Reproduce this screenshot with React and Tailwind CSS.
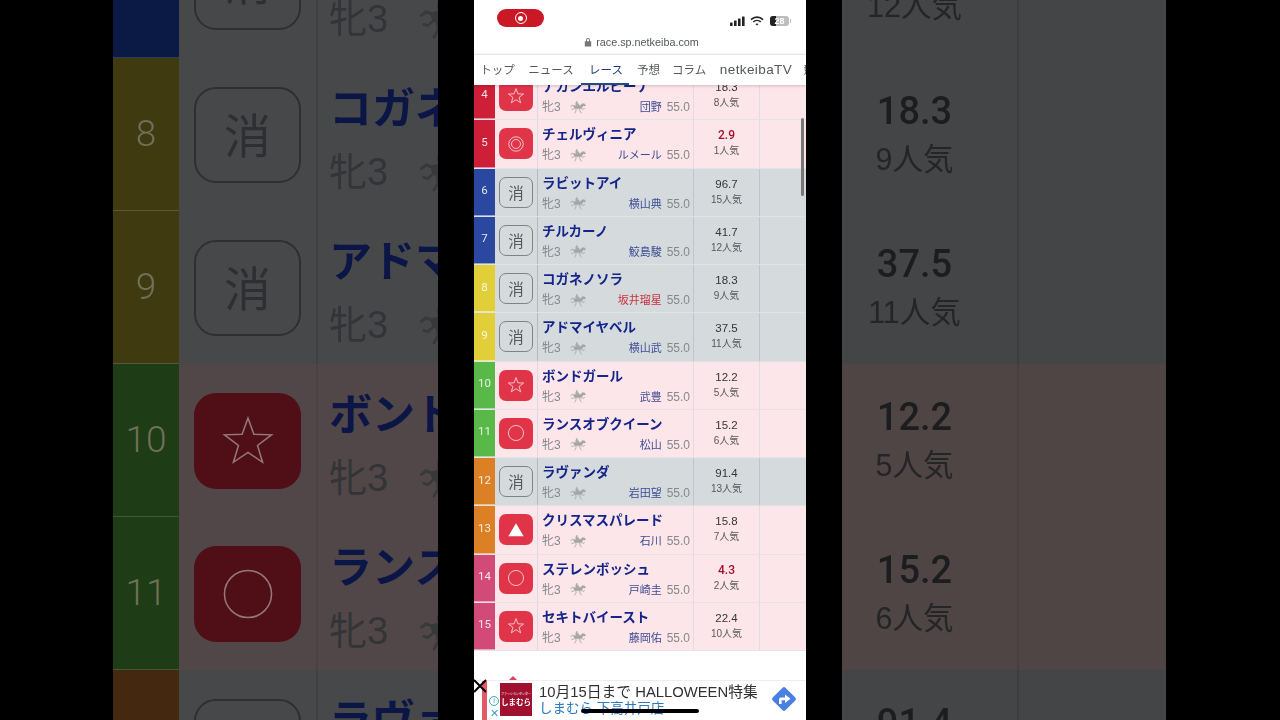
const FONT = "font-['Liberation_Sans','Noto_Sans_CJK_JP',sans-serif]";

function Horse({ className }) {
  return (
    <svg viewBox="0 0 18 14" className={className} fill="currentColor" stroke="currentColor" strokeLinecap="round" strokeLinejoin="round">
      <circle cx="7.2" cy="1.2" r="1" stroke="none" />
      <path d="M6.2 2.2 L8.6 2.6 L9.6 4.2 L6.6 4.6 Z" strokeWidth="0.5" />
      <path d="M4 5.2 C6 4.2 9 4.4 11 4.8 L13.4 2.8 L15.4 3 L16.8 4.8 L15.6 5.3 L14.2 5 L12.4 7.6 C10 8.6 6.6 8.6 4.6 7.6 Z" strokeWidth="0.4" />
      <path d="M4.4 5.4 L2.4 4.6 L0.8 5.8" fill="none" strokeWidth="1" />
      <path d="M5 7.4 L3 9.2 L1.6 8.8 M6 8 L6.4 10.6 L5 13 M11.6 7.8 L13.6 9 L15.4 8.2 M10.2 8.2 L10.6 10.8 L12 13" fill="none" strokeWidth="0.9" />
    </svg>
  );
}

function Mark({ type, big }) {
  const box = big
    ? "w-[107px] h-[96px] rounded-[22px] flex items-center justify-center"
    : "w-[34px] h-[31px] rounded-[7px] flex items-center justify-center";
  if (type === "消") {
    return (
      <div
        className={
          big
            ? `${box} pt-[6px] border-2 border-[#2e2f32] text-[#2e2f32] text-[47px]`
            : `${box} pt-[2px] border border-[#808488] text-[#55585c] text-[15.5px]`
        }
      >
        消
      </div>
    );
  }
  const s = big ? "w-[56px] h-[56px]" : "w-[18px] h-[18px]";
  const stroke = big ? "#94787b" : "#f7dfe2";
  return (
    <div className={`${box} ${big ? "bg-[#500f16]" : "bg-[#e03549]"}`}>
      <svg viewBox="0 0 20 20" className={s} fill="none" stroke={stroke} strokeWidth={big ? "0.55" : "0.9"}>
        {type === "star" && <path d="M10 1.8 L12.1 7.6 L18.4 7.8 L13.4 11.6 L15.2 17.6 L10 14.1 L4.8 17.6 L6.6 11.6 L1.6 7.8 L7.9 7.6 Z" />}
        {type === "circle" && <circle cx="10" cy="10" r="8.4" />}
        {type === "double" && (
          <>
            <circle cx="10" cy="10" r="8" />
            <circle cx="10" cy="10" r="5" />
          </>
        )}
        {type === "tri" && <path d="M10 2.5 L18.5 17 L1.5 17 Z" fill="#ffffff" stroke="none" />}
      </svg>
    </div>
  );
}

const rows = [
  { n: 4, c: "bg-[#cd1f38]", m: "star", name: "ナカンエルピーナ", j: "団野", o: "18.3", p: "8人気" },
  { n: 5, c: "bg-[#cd1f38]", m: "double", name: "チェルヴィニア", j: "ルメール", o: "2.9", p: "1人気", hot: true },
  { n: 6, c: "bg-[#2a489f]", m: "消", name: "ラビットアイ", j: "横山典", o: "96.7", p: "15人気" },
  { n: 7, c: "bg-[#2a489f]", m: "消", name: "チルカーノ", j: "鮫島駿", o: "41.7", p: "12人気" },
  { n: 8, c: "bg-[#e0cf38]", m: "消", name: "コガネノソラ", j: "坂井瑠星", o: "18.3", p: "9人気", red: true },
  { n: 9, c: "bg-[#e0cf38]", m: "消", name: "アドマイヤベル", j: "横山武", o: "37.5", p: "11人気" },
  { n: 10, c: "bg-[#58b848]", m: "star", name: "ボンドガール", j: "武豊", o: "12.2", p: "5人気" },
  { n: 11, c: "bg-[#58b848]", m: "circle", name: "ランスオブクイーン", j: "松山", o: "15.2", p: "6人気" },
  { n: 12, c: "bg-[#db8024]", m: "消", name: "ラヴァンダ", j: "岩田望", o: "91.4", p: "13人気" },
  { n: 13, c: "bg-[#db8024]", m: "tri", name: "クリスマスパレード", j: "石川", o: "15.8", p: "7人気" },
  { n: 14, c: "bg-[#d24a78]", m: "circle", name: "ステレンボッシュ", j: "戸崎圭", o: "4.3", p: "2人気", hot: true },
  { n: 15, c: "bg-[#d24a78]", m: "star", name: "セキトバイースト", j: "藤岡佑", o: "22.4", p: "10人気" },
];

function PhoneRow({ r }) {
  const off = r.m === "消";
  const rowBg = off ? "bg-[#d5dadd]" : "bg-[#fde6e9]";
  const line = off ? "border-[#bfc5ca]" : "border-[#dcdde6]";
  return (
    <div className={`flex h-[48.25px] ${rowBg} border-b ${off ? "border-[#dfe3e6]" : "border-[#e6e2e9]"}`}>
      <div className={`w-[21px] pb-[2px] flex items-center justify-center font-['Roboto'] text-[11.5px] text-white/85 border-b border-white/50 ${r.c}`}>{r.n}</div>
      <div className={`w-[43px] flex items-center justify-center border-r ${off ? "border-[#b5babf]" : "border-[#d8d9e2]"}`}>
        <Mark type={r.m} />
      </div>
      <div className={`w-[156px] pl-[4px] pr-[3px] border-r ${line}`}>
        <div className="pt-[6px] text-[13.5px] leading-[18px] font-bold text-[#14248a] whitespace-nowrap">{r.name}</div>
        <div className="mt-[3px] flex items-center justify-between text-[12px] leading-[16px] text-[#85888c]">
          <div className="flex items-center gap-[9px]">
            <span>牝3</span>
            <Horse className="w-[17px] h-[13px] text-[#a3a5a6]" />
          </div>
          <div className="flex items-center gap-[5px] whitespace-nowrap">
            <span className={`text-[11px] ${r.red ? "text-[#c8333f]" : "text-[#3d4c94]"}`}>{r.j}</span>
            <span>55.0</span>
          </div>
        </div>
      </div>
      <div className={`w-[66px] flex flex-col items-center border-r ${line}`}>
        <div className={`pt-[6px] leading-[18px] ${r.hot ? "font-['Roboto'] font-medium text-[12px] text-[#a80f2c]" : "text-[11.5px] text-[#333538]"}`}>{r.o}</div>
        <div className="text-[10px] leading-[14px] text-[#55585c]">{r.p}</div>
      </div>
      <div className="flex-1" />
    </div>
  );
}

const leftRows = [
  { n: 7, c: "bg-[#0a1a45]", m: "消", name: "チルカーノ" },
  { n: 8, c: "bg-[#3f3a10]", m: "消", name: "コガネノソラ" },
  { n: 9, c: "bg-[#3f3a10]", m: "消", name: "アドマイヤベル" },
  { n: 10, c: "bg-[#1e3c16]", m: "star", name: "ボンドガール" },
  { n: 11, c: "bg-[#1e3c16]", m: "circle", name: "ランスオブクイーン" },
  { n: 12, c: "bg-[#44280f]", m: "消", name: "ラヴァンダ" },
];

function LeftRow({ r }) {
  const off = r.m === "消";
  return (
    <div className={`flex h-[153px] shrink-0 ${off ? "bg-[#47484a]" : "bg-[#524748]"}`}>
      <div className={`w-[66px] shrink-0 flex items-center justify-center font-['Roboto'] font-light text-[37px] text-[#6f7058] border-b border-white/15 ${r.c}`}>{r.n}</div>
      <div className={`w-[139px] shrink-0 pl-[15px] flex items-center border-r-2 ${off ? "border-[#3f4043]" : "border-[#4a4344]"}`}>
        <Mark type={r.m} big />
      </div>
      <div className="pl-[11px] min-w-0">
        <div className="pt-[22px] text-[43px] leading-[58px] font-bold text-[#0b1646] whitespace-nowrap">{r.name}</div>
        <div className="mt-[9px] flex items-center gap-[31px] text-[38px] leading-[50px] text-[#333437]">
          <span className="whitespace-nowrap">牝3</span>
          <Horse className="w-[54px] h-[42px] shrink-0 text-[#38393b]" />
        </div>
      </div>
    </div>
  );
}

const rightRows = [
  { m: "消", o: "41.7", p: "12人気" },
  { m: "消", o: "18.3", p: "9人気" },
  { m: "消", o: "37.5", p: "11人気" },
  { m: "star", o: "12.2", p: "5人気" },
  { m: "circle", o: "15.2", p: "6人気" },
  { m: "消", o: "91.4", p: "13人気" },
];

function RightRow({ r }) {
  const off = r.m === "消";
  return (
    <div className={`flex h-[153px] shrink-0 ${off ? "bg-[#444547]" : "bg-[#4f4545]"}`}>
      <div className={`w-[177px] pr-[30px] shrink-0 flex flex-col items-center border-r-2 ${off ? "border-[#3c3d40]" : "border-[#484040]"}`}>
        <div className="pt-[29px] font-['Roboto'] font-medium text-[38px] leading-[48px] text-[#1c1d1f]">{r.o}</div>
        <div className="text-[30.5px] leading-[48px] text-[#242527]">{r.p}</div>
      </div>
    </div>
  );
}

function StatusBar() {
  return (
    <div className="h-[33px] flex items-start bg-white relative">
      <div className="ml-[23px] mt-[9px] w-[47px] h-[18px] rounded-full bg-[#cb1827] flex items-center justify-center">
        <div className="w-[12px] h-[12px] rounded-full border border-white flex items-center justify-center">
          <div className="w-[5px] h-[5px] rounded-full bg-white" />
        </div>
      </div>
      <div className="ml-auto mr-[15px] mt-[16px] flex items-center">
        <svg viewBox="0 0 15 10" className="w-[15px] h-[10px]" fill="#222">
          <rect x="0" y="6.5" width="2.6" height="3.5" rx="0.5" />
          <rect x="4" y="4.5" width="2.6" height="5.5" rx="0.5" />
          <rect x="8" y="2.5" width="2.6" height="7.5" rx="0.5" />
          <rect x="12" y="0.5" width="2.6" height="9.5" rx="0.5" />
        </svg>
        <svg viewBox="0 0 14 10" className="ml-[5px] w-[14px] h-[10px]" fill="none" stroke="#222" strokeWidth="1.7">
          <path d="M1 3.6 C4.4 0.4 9.6 0.4 13 3.6" />
          <path d="M3.3 5.9 C5.4 4 8.6 4 10.7 5.9" />
          <path d="M7 9.6 L5.4 8 C6.3 7.2 7.7 7.2 8.6 8 Z" fill="#222" stroke="none" />
        </svg>
        <div className="ml-[6px] relative w-[19px] h-[10px] rounded-[3px] bg-[#bdbdbd] overflow-hidden flex items-center justify-center">
          <div className="absolute left-0 top-0 bottom-0 w-[6px] bg-[#222]" />
          <span className="relative text-[9px] leading-[10px] font-bold text-white">28</span>
        </div>
        <div className="ml-[1px] w-[1px] h-[4px] bg-[#bdbdbd]" />
      </div>
    </div>
  );
}

function Nav() {
  const items = [
    ["トップ", "w-[35px] ml-[6px]"],
    ["ニュース", "w-[46px] ml-[13px]"],
    ["レース", "w-[33px] ml-[15px] text-[#1f3a80]"],
    ["予想", "w-[23px] ml-[15px]"],
    ["コラム", "w-[34px] ml-[12px]"],
    ["netkeibaTV", "w-[74px] ml-[13px] text-[13.5px] tracking-[0.4px]"],
    ["競", "w-[13px] ml-[10px]"],
  ];
  return (
    <div className="relative h-[31px] pt-[1px] bg-white border-t border-[#e4e4e4] flex items-center text-[11.5px] text-[#55585c] whitespace-nowrap overflow-hidden shadow-[0_1px_3px_rgba(0,0,0,0.18)]">
      {items.map(([t, c]) => (
        <span key={t} className={`shrink-0 text-center ${c}`}>{t}</span>
      ))}
      <div className="absolute left-[107px] bottom-0 w-[48px] h-[2px] bg-[#234a84]" />
    </div>
  );
}

function Ad() {
  return (
    <div className="relative h-[40px] bg-white flex border-t border-[#eeeeee]">
      <div className="absolute left-[35px] -top-[5px] w-0 h-0 border-l-[4px] border-r-[4px] border-b-[4px] border-l-transparent border-r-transparent border-b-[#e0405a]" />
      <div className="ml-[8px] w-[5px] bg-[#e25a68]" />
      <div className="w-[12px] pl-[2px] flex flex-col items-center justify-end pb-[1px] text-[#3fa0c0]">
        <div className="w-[10px] h-[10px] rounded-full border border-[#3fa0c0] text-[7.5px] leading-[8px] text-center">i</div>
        <div className="mt-[2px] text-[11px] leading-[11px]">✕</div>
      </div>
      <div className="ml-[1px] mt-[2px] w-[32px] h-[33px] bg-[#a0102f] flex flex-col items-center justify-center text-white overflow-hidden">
        <span className="text-[3px] leading-[5px] whitespace-nowrap">ファッションセンター</span>
        <span className="text-[7.5px] leading-[11px] font-bold whitespace-nowrap">しまむら</span>
      </div>
      <div className="ml-[7px]">
        <div className="mt-[2px] text-[14.8px] leading-[18px] text-[#2f3033] whitespace-nowrap">10月15日まで HALLOWEEN特集</div>
        <div className="text-[13.5px] leading-[16px] text-[#2a78c0] whitespace-nowrap">しまむら 下高井戸店</div>
      </div>
      <svg viewBox="0 0 28 28" className="absolute left-[296px] top-[4px] w-[28px] h-[28px]">
        <rect x="5" y="5" width="18" height="18" rx="2" transform="rotate(45 14 14)" fill="#4a80e2" />
        <path d="M9 19 V14.5 Q9 12.5 11 12.5 H15 V9.5 L20.5 13.8 L15 18 V15.2 H11.6 V19 Z" fill="#ffffff" />
      </svg>
      <svg viewBox="0 0 14 14" className="absolute -left-[1px] -top-[2px] w-[14px] h-[14px]" stroke="#000000" strokeWidth="2">
        <path d="M1 1 L13 13 M13 1 L1 13" />
      </svg>
      <div className="absolute left-[107px] top-[28px] w-[118px] h-[4px] rounded-full bg-black" />
    </div>
  );
}

export default function App() {
  return (
    <div className={`w-[1280px] h-[720px] bg-black flex overflow-hidden ${FONT}`}>
      <div className="ml-[113px] w-[325px] h-full overflow-hidden blur-[0.6px]">
        <div className="-mt-[95px] flex flex-col">
          {leftRows.map((r) => <LeftRow key={r.n} r={r} />)}
        </div>
      </div>
      <div className="relative ml-[36px] w-[332px] h-full bg-white flex flex-col overflow-hidden blur-[0.3px]">
        <div className="relative z-10">
          <StatusBar />
          <div className="h-[21px] pb-[3px] bg-white flex items-center justify-center gap-[4px] pl-[3px] text-[10.8px] text-[#55585c]">
            <svg viewBox="0 0 10 12" className="w-[8px] h-[10px]" fill="#777">
              <path d="M2.5 5 V3.5 a2.5 2.5 0 0 1 5 0 V5 H9 V11.5 H1 V5 Z M3.7 5 H6.3 V3.5 a1.3 1.3 0 0 0 -2.6 0 Z" />
            </svg>
            <span>race.sp.netkeiba.com</span>
          </div>
          <Nav />
        </div>
        <div className="flex-1 overflow-hidden">
          <div className="-mt-[13px]">
            {rows.map((r) => <PhoneRow key={r.n} r={r} />)}
          </div>
        </div>
        <div className="absolute left-[327px] top-[118px] w-[2.5px] h-[78px] rounded-full bg-[#777777]" />
        <Ad />
      </div>
      <div className="ml-[36px] w-[324px] h-full overflow-hidden blur-[0.6px]">
        <div className="-mt-[95px] flex flex-col">
          {rightRows.map((r) => <RightRow key={r.o} r={r} />)}
        </div>
      </div>
    </div>
  );
}
